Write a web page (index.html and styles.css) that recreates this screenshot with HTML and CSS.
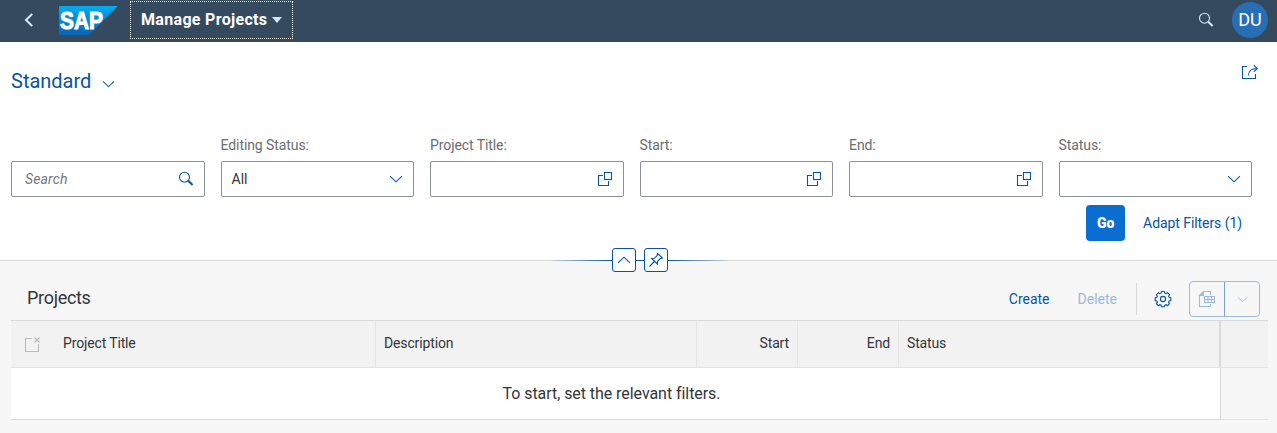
FILE: index.html
```
<!DOCTYPE html>
<html lang="en">
<head>
<meta charset="utf-8">
<title>Manage Projects</title>
<link rel="stylesheet" href="styles.css">
</head>
<body>
<svg class="defs" width="0" height="0">
  <symbol id="chevron" viewBox="0 0 14 8"><path d="M1 1.2 7 6.8 13 1.2"/></symbol>
  <symbol id="search" viewBox="0 0 16 16"><circle cx="6.5" cy="6.2" r="5"/><path d="M10.2 9.8 14.6 14" class="heavy"/></symbol>
  <symbol id="valuehelp" viewBox="0 0 16 16"><rect x="7.5" y="1.5" width="7" height="7"/><path d="M6 4.5H1.500v10h10V10"/></symbol>
</svg>
<header class="shell">
  <svg class="back" viewBox="0 0 10 16"><path d="M8.200 2 2 8l6.200 6"/></svg>
  <svg class="logo" viewBox="0 0 59 29">
    <defs><linearGradient id="lg" x1="0" y1="0" x2="0" y2="1"><stop offset="0" stop-color="#00aeef"/><stop offset="1" stop-color="#0a63b4"/></linearGradient></defs>
    <path d="M0 0H59L30 29H0z" fill="url(#lg)"/>
    <text x="1" y="23.200" textLength="43" lengthAdjust="spacingAndGlyphs">SAP</text>
  </svg>
  <button class="app-title"><span>Manage Projects</span><i class="caret"></i></button>
  <svg class="shell-search" viewBox="0 0 16 16"><use href="#search"/></svg>
  <span class="avatar">DU</span>
</header>
<section class="page-head">
  <div class="title-row">
    <h1>Standard</h1>
    <svg class="chev title-chev"><use href="#chevron"/></svg>
    <svg class="share" viewBox="0 0 18 16"><path d="M6 2.500H1.500v12h13V10"/><path d="M7.500 11.500C7.500 7 10 4.500 16 4.500M12.800 1.200 16.300 4.500l-3.500 3.300"/></svg>
  </div>
  <div class="filters">
    <div class="field"><label></label><div class="input"><em>Search</em><svg class="icon"><use href="#search"/></svg></div></div>
    <div class="field"><label>Editing Status:</label><div class="input"><span>All</span><svg class="chev"><use href="#chevron"/></svg></div></div>
    <div class="field"><label>Project Title:</label><div class="input"><svg class="icon"><use href="#valuehelp"/></svg></div></div>
    <div class="field"><label>Start:</label><div class="input"><svg class="icon"><use href="#valuehelp"/></svg></div></div>
    <div class="field"><label>End:</label><div class="input"><svg class="icon"><use href="#valuehelp"/></svg></div></div>
    <div class="field"><label>Status:</label><div class="input"><svg class="chev"><use href="#chevron"/></svg></div></div>
  </div>
  <div class="actions"><button class="go">Go</button><button class="link adapt">Adapt Filters (1)</button></div>
  <div class="header-toggle">
    <i class="fade left"></i>
    <button><svg class="chev up"><use href="#chevron"/></svg></button>
    <i class="joint"></i>
    <button><svg class="pin" viewBox="0 0 16 16"><path d="M9.500 1.500 14.500 6 12.500 6.500 9.700 9 9.500 12 3.500 6.500 6.500 6.300 9.200 3.500zM6.300 9.500 1.500 14.500"/></svg></button>
    <i class="fade right"></i>
  </div>
</section>
<main>
  <div class="toolbar">
    <h2>Projects</h2>
    <button class="link create">Create</button>
    <button class="link delete">Delete</button>
    <i class="separator"></i>
    <svg class="gear" viewBox="0 0 18 18"><circle cx="9" cy="9" r="2.600"/><path d="M7.500 1.500h3l.4 1.700 1.100.5 1.500-1 2 2-.9 1.500.5 1.200 1.700.4v2.800l-1.700.4-.5 1.100.9 1.600-2 2-1.500-1-1.100.5-.4 1.600h-3l-.4-1.600-1.200-.5-1.500 1-2-2 1-1.600-.5-1.100-1.700-.4V7.800l1.700-.4.5-1.200-1-1.500 2-2 1.500 1 1.200-.5z"/></svg>
    <div class="export">
      <span><svg class="sheet" viewBox="0 0 18 16"><path d="M12.500 4V.5H5.500L1.500 4.500v11H12.500V13"/><path class="solid" d="M5.500.5v4h-4z"/><path d="M6.500 5.500h10v6h-10zM6.500 8.500h10M10 5.500v6M13.500 5.500v6"/></svg></span>
      <span><svg class="chev small"><use href="#chevron"/></svg></span>
    </div>
  </div>
  <div class="table">
    <div class="row head">
      <div class="select"><svg viewBox="0 0 16 16"><path d="M8 2.500H1.500v13h13V8"/><path d="M10.500 1.500l5 5M15.500 1.500l-5 5"/></svg></div>
      <div class="cell">Project Title</div>
      <div class="cell">Description</div>
      <div class="cell end">Start</div>
      <div class="cell end">End</div>
      <div class="cell last">Status</div>
      <div></div>
    </div>
    <div class="row body">
      <div class="empty">To start, set the relevant filters.</div>
      <div class="rest"></div>
    </div>
  </div>
</main>
</body>
</html>
```
FILE: styles.css
```
* { box-sizing: border-box; }
body { margin: 0; height: 433px; overflow: hidden; background: #f7f7f7; color: #32363a; font: 14px/18px Roboto, "Liberation Sans", sans-serif; }
button { font: inherit; background: none; border: 0; padding: 0; }
h1, h2 { margin: 0; font-weight: 400; }
svg { display: block; flex: none; fill: none; stroke: #0854a0; stroke-width: 1.1; }
.defs { position: absolute; }
.heavy { stroke-width: 2; }
.icon { width: 16px; height: 16px; }
.chev { width: 14px; height: 8px; }

.shell { display: flex; align-items: center; height: 42px; background: #354a5f; padding: 0 9px 2px 24px; }
.back { width: 10px; height: 16px; stroke: #d1e8ff; stroke-width: 2; }
.logo { width: 59px; height: 29px; margin-left: 25px; stroke: none; }
.logo text { fill: #fff; stroke: #fff; stroke-width: 1; font: bold 24px "Liberation Sans", sans-serif; }
.app-title { display: flex; align-items: center; gap: 5px; width: 163px; height: 38px; margin-left: 12px; padding-left: 10px; border: 1px dotted #fff; color: #fff; font-size: 16px; font-weight: 700; white-space: nowrap; }
.app-title span { letter-spacing: .32px; }
.caret { border: 5px solid transparent; border-top: 6px solid #d1e8ff; border-bottom: 0; }
.shell-search { width: 16px; height: 16px; margin-left: auto; stroke: #d1e8ff; }
.avatar { width: 36px; height: 36px; margin-left: 18px; border-radius: 50%; background: #286eb4; color: #fff; font-size: 18px; line-height: 36px; text-align: center; }

.page-head { display: flex; flex-direction: column; height: 219px; padding: 0 25px 0 11px; background: #fff; border-bottom: 1px solid #d9d9d9; }
.title-row { display: flex; align-items: center; flex: none; height: 78px; padding-top: 1px; }
h1 { margin-bottom: 2px; font-size: 20px; color: #0854a0; }
.title-chev { width: 13px; margin: 5px 0 0 11px; }
.share { width: 18px; height: 16px; margin: 0 -7px 19px auto; }
.filters { display: grid; grid-template-columns: repeat(6, 1fr); gap: 16px; padding-top: 16px; }
.field label { display: block; height: 25px; color: #6a6d70; letter-spacing: -.08px; }
.input { display: flex; align-items: center; height: 36px; padding: 0 10px; border: 1px solid #89919a; border-radius: 2px; }
.input svg { margin-left: auto; }
.input em { padding-left: 3px; color: #74777a; letter-spacing: .15px; }
.actions { display: flex; justify-content: flex-end; gap: 8px; margin-top: 8px; }
.go { width: 39px; height: 36px; border-radius: 4px; background: #0a6ed1; color: #fff; font-weight: 900; }
.link { color: #0854a0; padding: 0 10px; white-space: nowrap; }
.adapt { letter-spacing: -.07px; }
.header-toggle { display: flex; align-items: center; align-self: center; height: 24px; margin: 7px 0 0 17px; position: relative; z-index: 1; flex: none; }
.header-toggle button { display: grid; place-items: center; width: 24px; height: 24px; background: #fff; border: 1px solid #0854a0; border-radius: 3px; }
.fade { width: 64px; height: 1px; }
.left { background: linear-gradient(to right, transparent, #0854a0); }
.right { background: linear-gradient(to left, transparent, #0854a0); }
.joint { width: 8px; height: 1px; background: #0854a0; }
.up { transform: scaleY(-1); }
.pin { width: 16px; height: 16px; }

main { padding: 0 9px 0 11px; }
.toolbar { display: flex; align-items: center; height: 59px; padding: 17px 8px 0 16px; }
h2 { margin: -2px auto 0 0; font-size: 18px; letter-spacing: -.3px; }
.create { margin-right: 8px; }
.delete { color: #9cbbd9; }
.separator { width: 1px; height: 32px; margin: 0 17px 0 9px; background: #d9d9d9; }
.gear { width: 18px; height: 18px; }
.export { display: grid; grid-template-columns: 34px 1fr; width: 71px; height: 36px; margin-left: 17px; border: 1px solid #9cbbd9; border-radius: 4px; }
.export span { display: grid; place-items: center; }
.export span + span { border-left: 1px solid #76a4d0; }
.export svg { stroke: #9cbbd9; }
.export .small { width: 11px; height: 7px; }
.sheet { width: 18px; height: 16px; }
.solid { fill: #9cbbd9; }

.table { border-top: 1px solid #d9d9d9; }
.row { display: grid; }
.head { grid-template-columns: 44px 321px 321px 101px 101px 322px 1fr; height: 47px; background: #f2f2f2; border-bottom: 1px solid #e4e4e4; line-height: 44px; }
.cell { padding: 0 8px; border-right: 1px solid #e4e4e4; letter-spacing: -.14px; }
.end { text-align: right; }
.last { border-right: 2px solid #d9d9d9; }
.select { display: grid; place-items: center; }
.select svg { width: 16px; height: 16px; margin-right: 2px; stroke: #b8babc; }
.body { grid-template-columns: 1210px 1fr; height: 52px; }
.empty { padding-right: 8px; background: #fff; border-right: 1px solid #d9d9d9; border-bottom: 1px solid #d9d9d9; font-size: 16px; letter-spacing: -.06px; line-height: 51px; text-align: center; }
.rest { border-bottom: 1px solid #e4e4e4; }
```
